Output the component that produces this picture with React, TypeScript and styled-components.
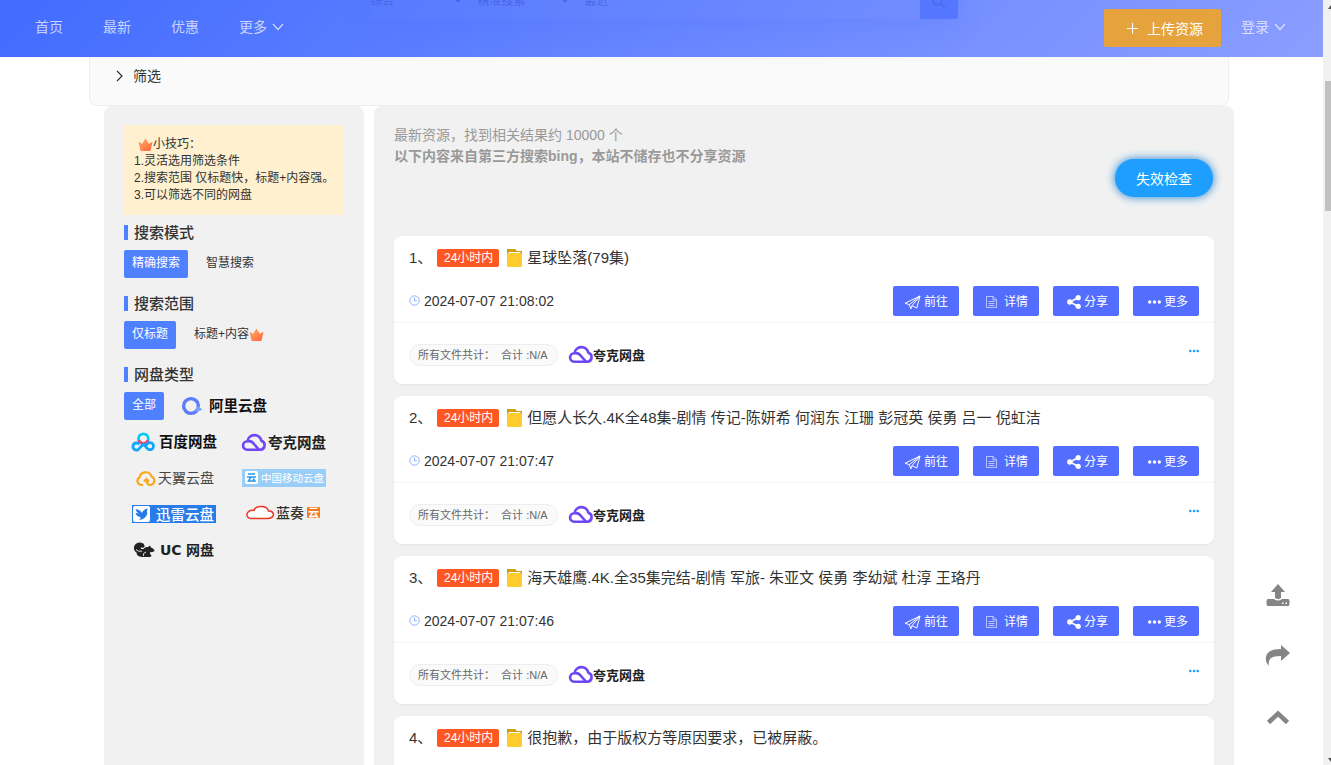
import React from 'react';
import styled, { createGlobalStyle } from 'styled-components';

const Global = createGlobalStyle`
  *, *::before, *::after { box-sizing: border-box; }
  body {
    margin: 0;
    background: #fff;
    color: #333;
    font: 14px/24px "Liberation Sans", "Noto Sans CJK SC", sans-serif;
  }
  h1, h2, h3, p, ul, ol { margin: 0; padding: 0; font-weight: 400; }
  ul, ol { list-style: none; }
  a { color: inherit; text-decoration: none; }
  button, select { font: inherit; cursor: pointer; }
  svg { display: block; flex: none; overflow: visible; }
`;

const Window = styled.div`
  display: flex;
  height: 100vh;
  overflow: hidden;
`;

const Page = styled.div`
  position: relative;
  flex: 1;
  min-width: 0;
  overflow: hidden;
`;

const Track = styled.div`
  display: flex;
  flex-direction: column;
  justify-content: space-between;
  align-items: flex-end;
  position: relative;
  width: 8px;
  padding: 5px 0 3px;
  overflow: hidden;
  color: #505050;
  background: #f1f1f1;
`;

const Thumb = styled.div`
  position: absolute;
  top: 81px;
  right: 0;
  width: 6px;
  height: 130px;
  background: #c1c1c1;
`;

const Header = styled.header`
  position: absolute;
  z-index: 2;
  inset: 0 0 auto;
  display: flex;
  align-items: center;
  justify-content: space-between;
  height: 57px;
  padding: 0 37px 1px 35px;
  color: rgba(255, 255, 255, 0.7);
  background: linear-gradient(135deg, #426cff, #8b9eff);
  overflow: hidden;
`;

const Nav = styled.nav`
  display: flex;
  gap: 40px;
`;

const NavLink = styled.a`
  display: flex;
  align-items: center;
  gap: 5px;
  padding-bottom: 3px;
`;

const Account = styled.div`
  display: flex;
  align-items: center;
  gap: 20px;
`;

const Upload = styled.button`
  display: flex;
  align-items: center;
  gap: 8px;
  height: 38px;
  padding: 1px 18px 0 22px;
  border: 0;
  border-radius: 2px;
  color: #fff;
  background: #e6a23c;
`;

const GhostSearch = styled.form`
  position: absolute;
  top: -19px;
  left: 28%;
  display: flex;
  width: 588px;
  height: 38px;
  border-radius: 2px;
  font-size: 12px;
  color: rgba(50, 70, 190, 0.45);
  background: rgba(100, 135, 255, 0.12);
  box-shadow: 0 4px 24px rgba(80, 110, 255, 0.25);
`;

const GhostField = styled.label`
  display: flex;
  align-items: center;
  width: 107px;
  padding: 2px 16px 0 0;
`;

const GhostSelect = styled.select`
  flex: 1;
  min-width: 0;
  padding: 0;
  border: 0;
  appearance: none;
  color: inherit;
  background: none;
`;

const GhostInput = styled.input`
  flex: 1;
  min-width: 0;
  border: 0;
  background: none;
`;

const GhostButton = styled.button`
  display: grid;
  place-items: center;
  width: 38px;
  padding: 3px 0 0;
  border: 0;
  border-radius: 2px;
  color: #4d68e6;
  background: #5577ff;
`;

const Container = styled.main`
  max-width: 1145px;
  margin: 0 auto;
  padding-top: 43px;
`;

const FilterPanel = styled.section`
  height: 63px;
  margin-right: 5px;
  padding: 20px 26px;
  border: 1px solid #eee;
  border-radius: 8px;
  background: #fafafa;
`;

const FilterButton = styled.button`
  display: flex;
  align-items: center;
  gap: 9px;
  padding: 0;
  border: 0;
  color: #333;
  background: none;
`;

const Columns = styled.div`
  display: flex;
  gap: 10px;
  margin-left: 15px;
`;

const Sidebar = styled.aside`
  width: 260px;
  min-height: 100vh;
  padding: 19px 20px;
  border-radius: 8px;
  background: #f1f1f1;
`;

const Tips = styled.div`
  height: 90px;
  padding: 11px 10px;
  font-size: 12px;
  line-height: 17px;
  white-space: nowrap;
  background: #fff0cf;
`;

const TipTitle = styled.p`
  display: flex;
  align-items: center;
  padding-left: 4px;
`;

const GroupTitle = styled.h2`
  margin: 10px 0;
  padding-left: 6px;
  border-left: 4px solid #4f80ff;
  font-size: 15px;
  line-height: 15px;
  font-weight: 500;
`;

const Group = styled.div`
  display: flex;
  gap: 10px;
  margin-bottom: 18px;
`;

const Choice = styled.button<{ $on?: boolean }>`
  display: flex;
  align-items: center;
  height: 28px;
  padding: 0 8px 2px;
  border: 0;
  border-radius: 2px;
  font-size: 12px;
  line-height: 24px;
  color: ${p => (p.$on ? '#fff' : '#333')};
  background: ${p => (p.$on ? '#4f80ff' : 'none')};
`;

const Drives = styled.div`
  display: grid;
  grid-template-columns: 110px 100px;
  grid-auto-rows: 36px;
`;

const FirstDrive = styled.div`
  display: flex;
  grid-column: 1 / -1;
  gap: 9px;
`;

const Drive = styled.button`
  display: flex;
  align-items: center;
  height: 28px;
  padding: 0 8px;
  border: 0;
  background: none;
`;

const Results = styled.section`
  flex: 1;
  min-width: 0;
  padding: 19px 20px;
  border-radius: 8px;
  background: #f1f1f1;
`;

const Summary = styled.div`
  position: relative;
  height: 111px;
  font-size: 14px;
  line-height: 21px;
  color: #999;
`;

const Strong = styled.p`
  font-weight: 700;
`;

const Check = styled.button`
  position: absolute;
  top: 34px;
  right: 1px;
  height: 38px;
  padding: 2px 21px 0;
  border: 0;
  border-radius: 19px;
  color: #fff;
  background: #1e9fff;
  box-shadow: 0 0 10px #1e80d0;
`;

const List = styled.ol`
  display: grid;
  gap: 12px;
`;

const Card = styled.li`
  height: 148px;
  border-radius: 8px;
  background: #fff;
  box-shadow: 0 1px 2px rgba(0, 0, 0, 0.05);
`;

const CardTop = styled.div`
  height: 87px;
  padding: 10px 15px 6px;
  border-bottom: 1px solid #f4f4f4;
`;

const Title = styled.h3`
  display: flex;
  align-items: center;
  height: 24px;
  font-size: 15px;
  white-space: nowrap;
`;

const Number = styled.span`
  width: 28px;
`;

const Badge = styled.span`
  height: 18px;
  margin-right: 8px;
  padding: 0 6px 0 7px;
  border-radius: 2px;
  font-size: 12px;
  line-height: 19px;
  color: #fff;
  background: #ff5722;
`;

const Name = styled.a`
  margin-left: 5px;
`;

const Row = styled.div`
  display: flex;
  align-items: center;
  justify-content: space-between;
`;

const MetaRow = styled(Row)`
  margin-top: 16px;
`;

const Time = styled.time`
  display: flex;
  align-items: center;
  gap: 4px;
  padding-bottom: 1px;
`;

const Actions = styled.div`
  display: flex;
  gap: 14px;
`;

const Action = styled.button`
  display: flex;
  align-items: center;
  justify-content: flex-end;
  gap: 3px;
  width: 66px;
  height: 30px;
  padding: 2px 11px 0;
  border: 0;
  border-radius: 2px;
  font-size: 12px;
  color: #fff;
  background: #536dfe;
`;

const Bottom = styled(Row)`
  height: 61px;
  padding: 3px 15px 0;
`;

const Files = styled.div`
  display: flex;
  align-items: center;
  gap: 12px;
`;

const Total = styled.span`
  height: 22px;
  padding: 0 9px 0 8px;
  border: 1px solid #eee;
  border-radius: 11px;
  font-size: 11px;
  line-height: 20px;
  white-space: pre;
  color: #666;
  background: #fafafa;
`;

const Dots = styled.button`
  padding: 0 0 8px;
  border: 0;
  color: #1e9fff;
  background: none;
`;

const Tools = styled.div`
  position: absolute;
  z-index: 1;
  right: 20px;
  bottom: 23px;
  display: grid;
  gap: 10px;
`;

const Tool = styled.button`
  display: grid;
  place-items: center;
  width: 50px;
  height: 51px;
  padding: 0;
  border: 0;
  border-radius: 50%;
  color: #858585;
  background: #fff;
`;

const LogoSvg = styled.svg`
  font-family: "Noto Sans CJK SC", sans-serif;
`;

const Chevron = ({ right }: { right?: boolean }) => (
  <svg width={right ? 8 : 12} height={right ? 12 : 8} viewBox={right ? '0 0 8 12' : '0 0 12 8'} fill="none" stroke="currentColor" strokeWidth="1.2">
    <path d={right ? 'M1 1L6 6L1 11' : 'M1 1L6 6.5L11 1'} />
  </svg>
);

const Crown = () => (
  <svg width="15" height="15" viewBox="0 0 15 15">
    <defs>
      <linearGradient id="crown" x2="1" y2="1">
        <stop stopColor="#ffac70" />
        <stop offset="1" stopColor="#ff6633" />
      </linearGradient>
    </defs>
    <path fill="url(#crown)" d="M0.5 4.8L4.3 6.8L7.4 1.5L10.8 6.8L14.5 4.8L12.7 13Q12.5 14 11.5 14H3.5Q2.5 14 2.3 13Z" />
  </svg>
);

const Folder = () => (
  <svg width="15" height="18" viewBox="0 0 15 18">
    <path fill="#cf9e0b" d="M0 0H8L10 2H15V8H0Z" />
    <path fill="#fff" d="M1.5 3H13.5V6H1.5Z" />
    <path fill="#ffcc2e" d="M0 5H1.5L3 4H13L15 5V17Q15 18 14 18H1Q0 18 0 17Z" />
  </svg>
);

const Clock = () => (
  <svg width="11" height="11" viewBox="0 0 11 11" fill="none" stroke="#8fb0ff">
    <circle cx="5.5" cy="5.5" r="4.7" />
    <path d="M5.5 2.5V5.8H8" />
  </svg>
);

const Plane = () => (
  <svg width="17" height="15" viewBox="0 0 17 15" fill="none" stroke="currentColor" strokeWidth="1" strokeLinejoin="round">
    <path d="M1 8.3L16 1L12.8 13L8 10.7L6.8 14L5.3 9.6Z M5.3 9.6L16 1L8 10.7" />
  </svg>
);

const Doc = () => (
  <svg width="15" height="12" viewBox="0 0 15 12" fill="none" stroke="currentColor" opacity=".6">
    <path d="M.5 .5H7L10.5 4V11.500H.5Z M7 .5V4H10.500 M2.500 5.500H8.500 M2.500 7.500H8.500 M2.500 9.500H8.500" />
  </svg>
);

const Share = () => (
  <svg width="14" height="14" viewBox="0 0 14 14" fill="currentColor">
    <path d="M11 2.8L3 7L11 11.2" fill="none" stroke="currentColor" strokeWidth="1.7" />
    <circle cx="2.8" cy="7" r="2.7" />
    <circle cx="11.2" cy="2.7" r="2.6" />
    <circle cx="11.2" cy="11.3" r="2.6" />
  </svg>
);

const Ellipsis = ({ size = 13 }: { size?: number }) => (
  <svg width={size} height="4" viewBox={`0 0 ${size} 4`} fill="currentColor">
    {[0.13, 0.5, 0.87].map(f => (
      <circle key={f} cx={size * f} cy="2" r={size * 0.13} />
    ))}
  </svg>
);

const Arrow = ({ down }: { down?: boolean }) => (
  <svg width="3" height="4" viewBox="0 0 3 4" fill="currentColor">
    <path d={down ? 'M0 0H3V4Z' : 'M0 4H3V0Z'} />
  </svg>
);

const Quark = ({ large }: { large?: boolean }) => (
  <LogoSvg width={large ? 86 : 76} height="20" viewBox={large ? '0 0 86 20' : '0 0 76 20'}>
    <g transform={large ? 'translate(0 1)' : 'translate(-1 0)'} fill="none" stroke="#6f47f5" strokeWidth="2.600" strokeLinejoin="round">
      <path d="M5.200 16.800H18.800A4.700 4.700 0 0 0 19.300 7.700A7 7 0 0 0 5.500 8.200A4.300 4.300 0 0 0 5.200 16.800Z" />
      <path d="M5.500 8.200Q9.500 7.500 12 11L17.200 16.800" />
    </g>
    <text x={large ? 26 : 23} y={large ? 15.5 : 14.5} fontSize={large ? 14.5 : 13} fontWeight="700" fill="#222">夸克网盘</text>
  </LogoSvg>
);

const Ali = () => (
  <LogoSvg width="86" height="20" viewBox="0 0 86 20">
    <circle cx="10" cy="10" r="7.400" fill="none" stroke="#5b7cff" strokeWidth="3.400" />
    <path d="M13 14.500Q18 17 21.500 13Q18.500 12.500 18 9.500Z" fill="#7da2ff" />
    <text x="28" y="15" fontSize="14.500" fontWeight="700" fill="#111">阿里云盘</text>
  </LogoSvg>
);

const Baidu = () => (
  <LogoSvg width="86" height="20" viewBox="0 0 86 20" fill="none" strokeWidth="2.800">
    <circle cx="11.400" cy="6.800" r="4.900" stroke="#08c9fa" />
    <path d="M6.800 8.300A4.900 4.900 0 0 0 16 8.300" stroke="#fb3f6b" />
    <path d="M7.300 11.800L4.700 11A3.500 3.500 0 1 0 7.600 16L11.400 12L15 16A3.500 3.500 0 1 0 15.600 11.600L14 13" stroke="#12a8fa" />
    <text x="27" y="15" fontSize="14.500" fontWeight="700" fill="#111">百度网盘</text>
  </LogoSvg>
);

const Tianyi = () => (
  <LogoSvg width="86" height="20" viewBox="0 0 86 20">
    <path d="M11 17H9.500A4 4 0 0 1 7.500 9.500A6.200 6.200 0 0 1 19.500 8.500A4.500 4.500 0 0 1 19 17H18Q14.500 16.500 14.500 11.500M12 13.500L14.500 11L17 13.500" fill="none" stroke="#fba81f" strokeWidth="2.200" />
    <text x="26" y="15" fontSize="14" fill="#444">天翼云盘</text>
  </LogoSvg>
);

const Mobile = () => (
  <LogoSvg width="84" height="18" viewBox="0 0 84 18">
    <path fill="#99cef8" d="M0 0H84V18H0Z" />
    <rect x="3" y="2" width="13" height="13" rx="2" fill="#fff" />
    <path d="M6 5H13M5 8H14M9 8L6.500 12H13L11 9.500" fill="none" stroke="#2499ef" strokeWidth="1.500" />
    <text x="19" y="12.500" fontSize="10.500" fill="#fff">中国移动云盘</text>
  </LogoSvg>
);

const Xunlei = () => (
  <LogoSvg width="84" height="18" viewBox="0 0 84 18">
    <path fill="#287be8" d="M0 0H84V18H0Z" />
    <rect x="1" y="1" width="17" height="16" rx="2" fill="#fff" />
    <path d="M3.500 4Q8 4.500 10 8Q11.500 4 16 3.500Q14 7 15.500 8Q14 14 7 15Q9 13.500 8.500 12Q4 11 3.500 8L7 8.500Q4 7 3.500 4Z" fill="#237be9" />
    <text x="24" y="14.500" fontSize="14.500" fontWeight="500" fill="#fff">迅雷云盘</text>
  </LogoSvg>
);

const Lanzou = () => (
  <LogoSvg width="84" height="20" viewBox="0 0 84 20">
    <path d="M9 14.500H26Q31.500 14 31.500 10Q30.500 6.500 26.500 7Q25 2.200 19 2.500Q13.500 2.200 12 6.500Q6.500 5.500 4.800 10.500Q5 14 9 14.500Z" fill="#fff" stroke="#ef3527" strokeWidth="1.500" />
    <text x="34" y="13.500" fontSize="14" fontWeight="500" fill="#333">蓝奏</text>
    <rect x="65" y="3" width="13" height="11" rx="1" fill="#f47a20" />
    <text x="66" y="12.500" fontSize="11" fontWeight="700" fill="#fff">云</text>
  </LogoSvg>
);

const Uc = () => (
  <LogoSvg width="84" height="20" viewBox="0 0 84 20" fill="#222">
    <path d="M2 7Q3 2.500 8 2.500Q13 2.800 12.500 7Q11 8.500 9 7.200Q8 9.500 11.500 9Q13 6.500 16 7L18 5.500L19 7.500Q22.500 9 22.500 11Q21 12.500 18 12Q17.500 14 19.500 15.500L18.500 17H10Q4.500 16.500 4.500 12.500Q1.500 10.500 2 7Z" />
    <path d="M4 9.500Q6 12 10 11.200M14 12Q10.500 13 11.500 16" fill="none" stroke="#f1f1f1" strokeWidth=".9" />
    <text x="28" y="15" fontSize="14" fontWeight="700" fontFamily="DejaVu Sans">UC</text>
    <text x="54" y="15" fontSize="14" fontWeight="700">网盘</text>
  </LogoSvg>
);

const LargeQuark = () => <Quark large />;

const drives = [
  { name: '百度网盘', Logo: Baidu },
  { name: '夸克网盘', Logo: LargeQuark },
  { name: '天翼云盘', Logo: Tianyi },
  { name: '中国移动云盘', Logo: Mobile },
  { name: '迅雷云盘', Logo: Xunlei },
  { name: '蓝奏云', Logo: Lanzou },
  { name: 'UC网盘', Logo: Uc },
];

const items = [
  { name: '星球坠落(79集)', time: '2024-07-07 21:08:02' },
  { name: '但愿人长久.4K全48集-剧情 传记-陈妍希 何润东 江珊 彭冠英 侯勇 吕一 倪虹洁', time: '2024-07-07 21:07:47' },
  { name: '海天雄鹰.4K.全35集完结-剧情 军旅- 朱亚文 侯勇 李幼斌 杜淳 王珞丹', time: '2024-07-07 21:07:46' },
  { name: '很抱歉，由于版权方等原因要求，已被屏蔽。', time: '2024-07-07 21:07:45' },
];

const actions = [
  { label: '前往', Icon: Plane },
  { label: '详情', Icon: Doc },
  { label: '分享', Icon: Share },
  { label: '更多', Icon: Ellipsis },
];

const searchFields = [
  { label: '分类', value: '综合', arrow: true },
  { label: '模式', value: '精准搜索', arrow: true },
  { label: '时间', value: '最近', arrow: false },
];

const TopBar = () => (
  <Header>
    <GhostSearch onSubmit={e => e.preventDefault()}>
      {searchFields.map(({ label, value, arrow }) => (
        <GhostField key={label}>
          <GhostSelect aria-label={label}><option>{value}</option></GhostSelect>
          {arrow && <svg width="6" height="4" viewBox="0 0 6 4" fill="currentColor"><path d="M0 0H6L3 4Z" /></svg>}
        </GhostField>
      ))}
      <GhostInput aria-label="关键词" />
      <GhostButton aria-label="搜索">
        <svg width="14" height="14" viewBox="0 0 14 14" fill="none" stroke="currentColor" strokeWidth="1.500">
          <path d="M9 9L13 13" /><circle cx="5.500" cy="5.500" r="4.500" />
        </svg>
      </GhostButton>
    </GhostSearch>
    <Nav>
      <NavLink href="#home">首页</NavLink>
      <NavLink href="#new">最新</NavLink>
      <NavLink href="#deals">优惠</NavLink>
      <NavLink href="#more">更多 <Chevron /></NavLink>
    </Nav>
    <Account>
      <Upload>
        <svg width="13" height="13" viewBox="0 0 13 13" stroke="currentColor"><path d="M6.500 1V12M1 6.500H12" /></svg>
        上传资源
      </Upload>
      <NavLink href="#login">登录 <Chevron /></NavLink>
    </Account>
  </Header>
);

export default function App() {
  return (
    <>
      <Global />
      <Window>
        <Page>
          <TopBar />
          <Container>
            <FilterPanel>
              <FilterButton><Chevron right />筛选</FilterButton>
            </FilterPanel>
            <Columns>
              <Sidebar>
                <Tips>
                  <TipTitle><Crown />小技巧：</TipTitle>
                  <p>1.灵活选用筛选条件</p>
                  <p>2.搜索范围 仅标题快，标题+内容强。</p>
                  <p>3.可以筛选不同的网盘</p>
                </Tips>
                <GroupTitle>搜索模式</GroupTitle>
                <Group>
                  <Choice $on>精确搜索</Choice>
                  <Choice>智慧搜索</Choice>
                </Group>
                <GroupTitle>搜索范围</GroupTitle>
                <Group>
                  <Choice $on>仅标题</Choice>
                  <Choice>标题+内容<Crown /></Choice>
                </Group>
                <GroupTitle>网盘类型</GroupTitle>
                <Drives>
                  <FirstDrive>
                    <Choice $on>全部</Choice>
                    <Drive aria-label="阿里云盘"><Ali /></Drive>
                  </FirstDrive>
                  {drives.map(({ name, Logo }) => (
                    <Drive key={name} aria-label={name}><Logo /></Drive>
                  ))}
                </Drives>
              </Sidebar>
              <Results>
                <Summary>
                  <p>最新资源，找到相关结果约 10000 个</p>
                  <Strong>以下内容来自第三方搜索bing，本站不储存也不分享资源</Strong>
                  <Check>失效检查</Check>
                </Summary>
                <List>
                  {items.map((item, i) => (
                    <Card key={item.name}>
                      <CardTop>
                        <Title>
                          <Number>{i + 1}、</Number>
                          <Badge>24小时内</Badge>
                          <Folder />
                          <Name href="#item">{item.name}</Name>
                        </Title>
                        <MetaRow>
                          <Time><Clock />{item.time}</Time>
                          <Actions>
                            {actions.map(({ label, Icon }) => (
                              <Action key={label}><Icon />{label}</Action>
                            ))}
                          </Actions>
                        </MetaRow>
                      </CardTop>
                      <Bottom>
                        <Files>
                          <Total>所有文件共计：  合计 :N/A</Total>
                          <Quark />
                        </Files>
                        <Dots aria-label="更多信息"><Ellipsis size={10} /></Dots>
                      </Bottom>
                    </Card>
                  ))}
                </List>
              </Results>
            </Columns>
          </Container>
          <Tools>
            <Tool aria-label="上传">
              <svg width="24" height="24" viewBox="0 0 24 24" fill="currentColor">
                <path d="M12 1L19 9H15V15Q12 17 9 15V9H5Z" />
                <path fillRule="evenodd" d="M2 16H8Q12 19 16 16H22Q23.500 16 23.500 18V21Q23.500 23 22 23H2Q.5 23 .5 21V18Q.5 16 2 16ZM16 19.500V21H17.500V19.500ZM19.500 19.500V21H21V19.500Z" />
              </svg>
            </Tool>
            <Tool aria-label="转发">
              <svg width="26" height="24" viewBox="0 0 26 24" fill="currentColor">
                <path d="M16 1L25 9L16 17V12Q7 12 5 15Q3 18 4 22Q0 18 1 13Q2 5 16 5Z" />
              </svg>
            </Tool>
            <Tool aria-label="返回顶部">
              <svg width="24" height="16" viewBox="0 0 24 16" fill="none" stroke="currentColor" strokeWidth="4.500">
                <path d="M2.500 13.500L12 4.500L21.500 13.500" />
              </svg>
            </Tool>
          </Tools>
        </Page>
        <Track>
          <Arrow />
          <Thumb />
          <Arrow down />
        </Track>
      </Window>
    </>
  );
}
